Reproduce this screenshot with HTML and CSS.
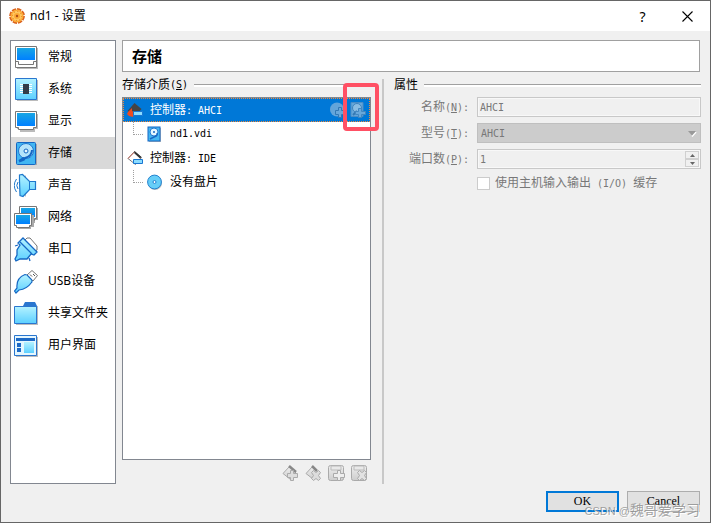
FILE: index.html
```
<!DOCTYPE html>
<html lang="zh-CN">
<head>
<meta charset="utf-8">
<title>nd1 - 设置</title>
<link rel="stylesheet" href="styles.css">
</head>
<body>
<svg class="defs" width="0" height="0">
<defs>
<linearGradient id="sky" x1="0" y1="0" x2="0" y2="1"><stop offset="0" stop-color="#b4f2ff"/><stop offset="1" stop-color="#5cd0ff"/></linearGradient>
<linearGradient id="screen" x1="0" y1="0" x2="0" y2="1"><stop offset="0" stop-color="#18a6e4"/><stop offset="1" stop-color="#0080ff"/></linearGradient>
<linearGradient id="gray" x1="0" y1="0" x2="0" y2="1"><stop offset="0" stop-color="#efefef"/><stop offset="1" stop-color="#cdcdcd"/></linearGradient>
</defs>
</svg>

<div class="window">
<header class="titlebar">
<svg class="gear" width="16" height="16" viewBox="0 0 16 16"><circle cx="8" cy="8" r="6.900" fill="none" stroke="#d9601c" stroke-width="2" stroke-dasharray="4.400 1"/><circle cx="8" cy="8" r="6.500" fill="#fba935"/><circle cx="8" cy="8" r="4" fill="none" stroke="#ffc861" stroke-width="2"/><circle cx="8" cy="8" r="1.200" fill="#b04a14"/><circle cx="8" cy="8" r="4.500" fill="none" stroke="#e07a20" stroke-dasharray="1 2.500"/></svg>
<span class="caption">nd1 - 设置</span>
<button class="tool" aria-label="帮助">?</button>
<button class="tool" aria-label="关闭"><svg width="11" height="11" viewBox="0 0 11 11"><path d="M.5 .5l10 10M10.500 .5l-10 10" stroke="#000" stroke-width="1.100"/></svg></button>
</header>

<div class="content">
<nav class="sidebar">
<a href="#general"><svg width="25" height="25" viewBox="0 0 25 25"><path d="M3 3h21v21H3z" fill="#bbb"/><path d="M1.500 1.500h21v21h-21z" fill="#fff" stroke="#777"/><path d="M3 3h18v12H3z" fill="url(#screen)"/><path d="M1.500 16.500h3v3h15v-3h3" fill="none" stroke="#777"/></svg>常规</a>
<a href="#system"><svg width="25" height="25" viewBox="0 0 25 25"><path d="M3 3h21v21H3z" fill="#bbb"/><path d="M1.500 1.500h21v21h-21z" fill="url(#sky)" stroke="#2a76cf"/><path d="M6 7.500h12M6 9.500h12M6 11.500h12M6 13.500h12M6 15.500h12" stroke="#fff"/><path d="M9 7h6v10H9z" fill="#333c48"/></svg>系统</a>
<a href="#display"><svg width="25" height="25" viewBox="0 0 25 25"><path d="M3 5h21v15h-3v3H6v-3H3z" fill="#bbb"/><path d="M1.500 2.500h21v16h-3v2h-15v-2h-3z" fill="#fff" stroke="#777"/><path d="M3 4h18v13H3z" fill="url(#screen)"/></svg>显示</a>
<a href="#storage" class="current"><svg width="25" height="25" viewBox="0 0 25 25"><path d="M4 3h19v21H4z" fill="#aaa"/><rect x="2.500" y="1.500" width="19" height="22" rx="1" fill="#42b6f2" stroke="#1567c4"/><circle cx="12" cy="10" r="7.500" fill="#b5e4fb" stroke="#2278d0"/><circle cx="12" cy="10" r="2" fill="#e9f8ff" stroke="#1567c4"/><path d="M4.500 19l5-3 3 .5-2 3-5 2z" fill="#1567c4"/><path d="M11 17q7-2 7-8" fill="none" stroke="#1567c4" stroke-width="2"/></svg>存储</a>
<a href="#audio"><svg width="25" height="25" viewBox="0 0 25 25"><path d="M7 8l5-6v22l-5-6z" fill="#bbb"/><path d="M5.500 7.500V2l3-.5 7 7h6v8h-6l-6.500 7-3-1z" fill="url(#sky)" stroke="#1d78cc" stroke-width="1.200"/><path d="M4 9q-2.500 3.500 0 7M2.500 6q-4.500 6.500 0 13" fill="none" stroke="#1d78cc"/><path d="M15.500 8.500v8" stroke="#1d78cc"/></svg>声音</a>
<a href="#network"><svg width="25" height="25" viewBox="0 0 25 25"><path d="M7 3h17v12h-3v3H7z" fill="#aaa"/><path d="M5.500 1.500h17v12h-2v2h-15z" fill="#fff" stroke="#777"/><path d="M7 3h14v9H7z" fill="url(#screen)"/><path d="M2 10h18v12h-3v2H4z" fill="#aaa"/><path d="M.5 8.500h17v12h-2v2h-13v-2h-2z" fill="#fff" stroke="#777"/><path d="M2 10h14v9H2z" fill="url(#screen)"/></svg>网络</a>
<a href="#serial"><svg width="25" height="25" viewBox="0 0 25 25"><path d="M11 3l2-2h3l7 8v4l-3 2z" fill="#fff" stroke="#777"/><path d="M6 4l3-3 14 14-3 3-3-1-4 5H6l-4 2-1-2 2-4v-5l3-5-2-2z" fill="url(#sky)" stroke="#1668c4" stroke-width="1.300"/><path d="M6 5l12 12M1 9l3-1M15 21l1 3" fill="none" stroke="#1668c4" stroke-width="1.300"/></svg>串口</a>
<a href="#usb"><svg width="25" height="25" viewBox="0 0 25 25"><path d="M13 6l5-4.500 5.500 5L19 12z" fill="#fff" stroke="#777"/><path d="M16 5.500l2 2M19 5l2 2" stroke="#555"/><path d="M3 19Q2 9 11 5.500q2 0 3 1.500l3.500 3.500q1 2 0 3Q13 20 5 21l-3 3-1.500-2z" fill="url(#sky)" stroke="#1668c4" stroke-width="1.200"/></svg>USB设备</a>
<a href="#shared"><svg width="25" height="25" viewBox="0 0 25 25"><path d="M2 5h22v19H2z" fill="#bbb"/><path d="M9 5l2-4h10l2 4v4H9z" fill="#2a76cf"/><path d="M.5 5.500h22v17H.5z" fill="url(#sky)" stroke="#2a76cf"/><path d="M10 5l1-3h10l1 3z" fill="#2a76cf"/></svg>共享文件夹</a>
<a href="#ui"><svg width="25" height="25" viewBox="0 0 25 25"><path d="M2 4h22v20H2z" fill="#bbb"/><path d="M.5 2.500h22v20H.5z" fill="#e4f7ff" stroke="#2a76cf"/><path d="M2 5h19v3H2z" fill="#1d6ac6"/><path d="M3 10h4v4H3zM3 15h4v4H3z" fill="#1d6ac6"/><path d="M10 9h10v11H10z" fill="url(#sky)"/></svg>用户界面</a>
</nav>

<main class="main">
<h1 class="page-title">存储</h1>
<div class="panes">
<section class="devices">
<h2 class="group">存储介质<span class="latin">(<u>S</u>)</span></h2>
<div class="tree">
<div class="node selected">
<svg width="17" height="17" viewBox="0 0 17 17"><path d="M7.500 1l7 6-6 7-8-5z" fill="#444"/><path d="M1 10l4-4v3l2 1-1 5-4-1-2-2z" fill="#ee4b20"/><path d="M6.500 9.500h9v4h-9z" fill="#8bdcff" stroke="#1976d2"/></svg>
<span class="name">控制器<span class="latin">: AHCI</span></span>
<button class="add" aria-label="添加虚拟光驱"><svg width="16" height="16" viewBox="0 0 16 16"><circle cx="7" cy="7.500" r="7" fill="#63a5da"/><path d="M8.500 5.500h3v3h3v4h-3v3h-3v-3h-3v-4h3z" fill="#69a8db" stroke="#3378b4"/></svg></button>
<button class="add" aria-label="添加虚拟硬盘"><svg width="16" height="16" viewBox="0 0 16 16"><path d="M1 .5h12v14H1z" fill="#64a6da" stroke="#4a8dc6"/><circle cx="7" cy="6" r="4.500" fill="#8bbde3" stroke="#3f83bc"/><path d="M3 13l4-4" stroke="#3378b4" stroke-width="2"/><path d="M8.500 6.500h3v3h4v3h-4v3h-3v-3h-3v-3h3z" fill="#69a8db" stroke="#4386bf"/></svg></button>
</div>
<div class="node child">
<svg width="15" height="16" viewBox="0 0 15 16"><path d="M2 2h12v14H2z" fill="#bbb"/><rect x="1" y="1" width="12" height="14" fill="#42b6f2" stroke="#1567c4"/><circle cx="7" cy="6" r="4" fill="#e2f6ff" stroke="#2278d0"/><circle cx="7" cy="6" r="1" fill="#1567c4"/><path d="M3 13l4-2q4-1 3-4" fill="none" stroke="#1567c4" stroke-width="1.500"/></svg>
<span class="name latin">nd1.vdi</span>
</div>
<div class="node">
<svg width="17" height="17" viewBox="0 0 17 17"><path d="M7.500 1.500l7 6-6 7-7.500-6z" fill="#fff" stroke="#777"/><path d="M7.500 1l7 6-1.500 1.500-6-5.500z" fill="#333"/><path d="M1 8.500l6-6" stroke="#d56a5a"/><path d="M6.500 9.500h9v4h-9z" fill="#8bdcff" stroke="#1976d2"/></svg>
<span class="name">控制器<span class="latin">: IDE</span></span>
</div>
<div class="node child">
<svg width="15" height="16" viewBox="0 0 15 16"><circle cx="8" cy="9" r="7" fill="#bbb"/><circle cx="7.500" cy="8" r="6.900" fill="#66cef8" stroke="#2482cf"/><circle cx="7.500" cy="8" r="1.500" fill="#fff" stroke="#2482cf"/></svg>
<span class="name">没有盘片</span>
</div>
<div class="marker"></div>
</div>
<div class="toolbar">
<button aria-label="添加控制器"><svg width="17" height="17" viewBox="0 0 17 17"><path d="M7.500 1.500l7 7-6 6-7.500-6z" fill="url(#gray)" stroke="#aaa"/><path d="M7 1l7 6" stroke="#888" stroke-width="2.500"/><path d="M8.500 5.500h3v3h4v4h-4v3h-3v-3h-3v-4h3z" fill="#ddd" stroke="#aaa"/></svg></button>
<button aria-label="删除控制器"><svg width="17" height="17" viewBox="0 0 17 17"><path d="M7.500 1.500l7 7-6 6-7.500-6z" fill="url(#gray)" stroke="#aaa"/><path d="M7 1l5 5" stroke="#888" stroke-width="2.500"/><path d="M6.500 7.500l2-2 2.500 2 2.500-2 2 2-2 3 2 3-2 2-2.500-2-2.500 2-2-2 2-3z" fill="#ddd" stroke="#aaa"/></svg></button>
<button aria-label="添加虚拟介质"><svg width="17" height="17" viewBox="0 0 17 17"><rect x=".5" y=".5" width="15" height="15" rx="2" fill="url(#gray)" stroke="#aaa"/><path d="M3 1h10v4H3z" fill="#e9e9e9" stroke="#bbb"/><path d="M9.500 5.500h3v3h4v4h-4v3h-3v-3h-4v-4h4z" fill="#eee" stroke="#aaa"/></svg></button>
<button aria-label="删除虚拟介质"><svg width="17" height="17" viewBox="0 0 17 17"><rect x=".5" y=".5" width="15" height="15" rx="2" fill="url(#gray)" stroke="#aaa"/><path d="M3 1h10v4H3z" fill="#e9e9e9" stroke="#bbb"/><path d="M6.500 7.500l2-2 2.500 2 2.500-2 2 2-2 3 2 3-2 2-2.500-2-2.500 2-2-2 2-3z" fill="#e2e2e2" stroke="#aaa"/></svg></button>
</div>
</section>

<div class="splitter"></div>

<section class="attributes">
<h2 class="group">属性</h2>
<div class="form">
<label for="name">名称<span class="latin">(<u>N</u>):</span></label>
<input class="field" type="text" id="name" value="AHCI" disabled>
<label for="type">型号<span class="latin">(<u>T</u>):</span></label>
<div class="holder">
<select class="field" id="type" disabled><option>AHCI</option></select>
<svg class="arrow" width="10" height="6" viewBox="0 0 10 6"><path d="M9 1L5 5.500" stroke="#fff" stroke-width="1.500"/><path d="M1 0h8L5 4.500z" fill="#999"/></svg>
</div>
<label for="ports">端口数<span class="latin">(<u>P</u>):</span></label>
<div class="holder">
<input class="field" type="number" id="ports" value="1" disabled>
<div class="spin">
<button aria-label="增加" disabled><svg width="5" height="3" viewBox="0 0 5 3"><path d="M0 3l2.500-3L5 3z" fill="#666"/></svg></button>
<button aria-label="减少" disabled><svg width="5" height="3" viewBox="0 0 5 3"><path d="M0 0l2.500 3L5 0z" fill="#666"/></svg></button>
</div>
</div>
<label class="check"><input type="checkbox" disabled><span>使用主机输入输出<span class="latin"> (I/O) </span>缓存</span></label>
</div>
</section>
</div>
</main>
</div>

<footer class="buttons">
<button class="ok">OK</button>
<button>Cancel</button>
</footer>
<div class="watermark"><span>CSDN @</span>魏哥爱学习</div>
</div>
</body>
</html>
```
FILE: styles.css
```
*{
box-sizing:border-box;
}

body{
margin:0;
font:12px/16px "Liberation Sans", "Noto Sans CJK SC", sans-serif;
color:#000;
}

button{
padding:0;
border:0;
background:none;
color:inherit;
}

svg{
display:block;
flex:none;
}

.defs{
position:absolute;
}

.latin{
font-family:"DejaVu Sans Mono", monospace;
font-size:10px;
white-space:pre;
}

.window{
position:relative;
display:flex;
flex-direction:column;
min-height:100vh;
border:1px solid #666;
background:#f0f0f0;
}

.titlebar{
display:flex;
align-items:center;
height:30px;
padding-left:8px;
background:#fff;
}

.caption{
flex:1;
padding-left:5px;
font-family:"Noto Sans", "Noto Sans CJK SC", sans-serif;
}

.tool{
display:flex;
align-items:center;
justify-content:center;
width:45px;
height:30px;
font:14px "Noto Sans", sans-serif;
}

.content{
display:flex;
flex:1;
gap:6px;
padding:9px 10px 0 9px;
}

.sidebar{
flex:none;
width:106px;
border:1px solid #828790;
background:#fff;
}

.sidebar a{
display:flex;
align-items:center;
gap:9px;
height:32px;
padding-left:3px;
color:#000;
text-decoration:none;
white-space:nowrap;
line-height:18px;
font-family:"Noto Sans", "Noto Sans CJK SC", sans-serif;
}

.sidebar a.current{
background:#d9d9d9;
}

.main{
display:flex;
flex:1;
flex-direction:column;
}

.page-title{
height:32px;
margin:0 0 5px;
padding-left:9px;
border:1px solid #a0a0a0;
background:#fff;
font:bold 15px/30px "Noto Sans CJK SC", sans-serif;
}

.panes{
display:flex;
flex:1;
}

.devices{
display:flex;
flex:none;
flex-direction:column;
width:249px;
}

.group{
display:flex;
align-items:center;
height:16px;
margin:0 0 4px;
font-size:12px;
font-weight:normal;
}

.group:after{
content:"";
flex:1;
height:2px;
margin-left:6px;
border-top:1px solid #a0a0a0;
background:#fff;
}

.tree{
position:relative;
flex:1;
border:1px solid #828790;
background:#fff;
}

.node{
display:flex;
align-items:center;
height:24px;
padding-left:4px;
}

.node .name{
flex:1;
padding-left:6px;
}

.node.selected{
padding-right:4px;
outline:1px dotted #f08a3a;
outline-offset:-1px;
background:#0078d7;
color:#fff;
}

.add{
width:16px;
margin-left:4px;
}

.child:before{
content:"";
width:9px;
height:12px;
margin:0 4px 12px 6px;
border:1px dotted #a0a0a0;
border-width:0 0 1px 1px;
}

.child .name{
padding-left:8px;
}

/* red frame around the add disk button */
.marker{
position:absolute;
top:-15px;
right:-9px;
width:36px;
height:48px;
border:4px solid #ff5064;
border-radius:4px;
}

.toolbar{
display:flex;
justify-content:flex-end;
gap:6px;
padding:5px 3px 2px;
}

.splitter{
width:2px;
margin:2px 10px 0 11px;
background:#c8c8c8;
}

.attributes{
flex:1;
margin-right:-1px;
}

.form{
display:grid;
grid-template-columns:75px 1fr;
grid-auto-rows:20px;
gap:6px 8px;
align-items:center;
color:#787878;
}

.form label{
text-align:right;
}

.holder{
position:relative;
}

.field{
display:block;
width:100%;
height:20px;
margin:0;
padding:0 2px;
border:1px solid #c8c8c8;
border-radius:0;
background:#f0f0f0;
color:#787878;
font:10px "DejaVu Sans Mono", monospace;
opacity:1;
appearance:none;
}

input.field{
box-shadow:inset 0 0 0 1px #f8f8f8;
}

select.field{
padding-left:3px;
background:#ccc;
border-color:#bfbfbf;
}

input[type=number]{
-moz-appearance:textfield;
}

input[type=number]::-webkit-inner-spin-button{
display:none;
}

.arrow{
position:absolute;
top:8px;
right:4px;
}

.spin{
position:absolute;
top:2px;
right:2px;
width:14px;
}

.spin button{
display:flex;
align-items:center;
justify-content:center;
width:14px;
height:8px;
border:1px solid #d0d0d0;
}

.form .check{
display:flex;
grid-column:2;
align-self:start;
align-items:center;
gap:5px;
text-align:left;
}

.check input{
width:13px;
height:13px;
margin:0;
border:1px solid #ccc;
background:#fff;
appearance:none;
}

.buttons{
display:flex;
justify-content:flex-end;
gap:8px;
padding:7px 10px 10px;
}

.buttons button{
width:73px;
height:21px;
border:1px solid #adadad;
background:#e1e1e1;
font:12px "Liberation Serif", serif;
}

.buttons .ok{
border:2px solid #0078d7;
}

.watermark{
position:absolute;
right:10px;
bottom:3px;
color:rgba(140,140,140,.8);
font-size:14px;
text-shadow:1px 1px 0 #fff;
white-space:pre;
}

.watermark span{
font-size:11px;
}
```
